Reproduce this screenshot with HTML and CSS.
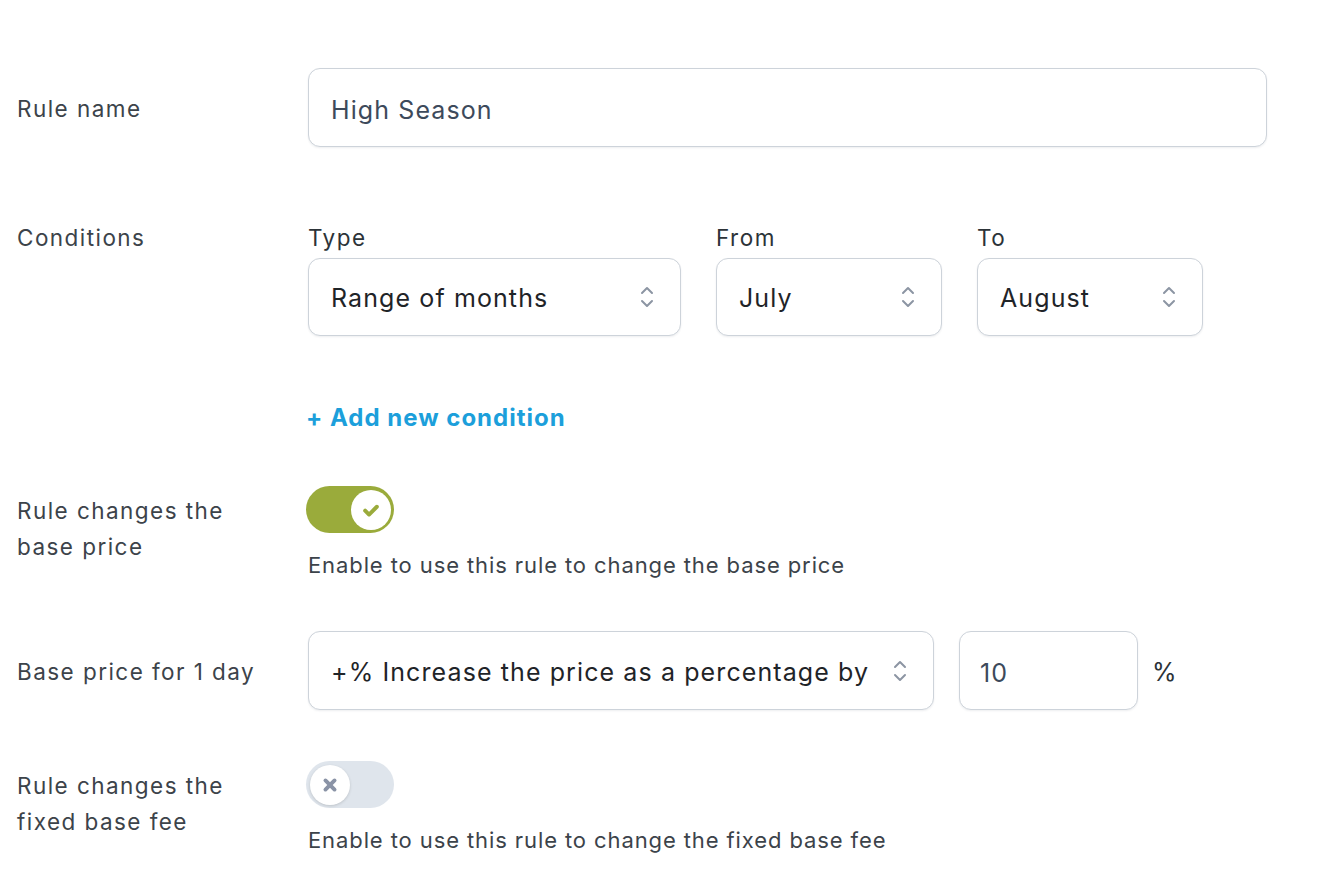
FILE: index.html
```html
<!DOCTYPE html>
<html>
<head>
<meta charset="utf-8">
<link rel="stylesheet" href="styles.css">
</head>
<body>
<div class="form">
  <div class="row row-name">
    <div class="label label-name">Rule name</div>
    <div class="field">
      <div class="input input-wide">High Season</div>
    </div>
  </div>

  <div class="row row-cond">
    <div class="label label-top">Conditions</div>
    <div class="field">
      <div class="cond">
        <div class="cond-col">
          <div class="sublabel">Type</div>
          <div class="select sel-type"><span>Range of months</span><svg class="chev" viewBox="0 0 14 26"><path d="M2 9 L7 4 L12 9 M2 17 L7 22 L12 17" fill="none" stroke="#8c95a3" stroke-width="2" stroke-linecap="round" stroke-linejoin="round"/></svg></div>
        </div>
        <div class="cond-col">
          <div class="sublabel">From</div>
          <div class="select sel-month"><span>July</span><svg class="chev" viewBox="0 0 14 26"><path d="M2 9 L7 4 L12 9 M2 17 L7 22 L12 17" fill="none" stroke="#8c95a3" stroke-width="2" stroke-linecap="round" stroke-linejoin="round"/></svg></div>
        </div>
        <div class="cond-col">
          <div class="sublabel">To</div>
          <div class="select sel-month"><span>August</span><svg class="chev" viewBox="0 0 14 26"><path d="M2 9 L7 4 L12 9 M2 17 L7 22 L12 17" fill="none" stroke="#8c95a3" stroke-width="2" stroke-linecap="round" stroke-linejoin="round"/></svg></div>
        </div>
      </div>
      <a class="add-link">+ Add new condition</a>
    </div>
  </div>

  <div class="row row-toggle1">
    <div class="label label-top label-2l">Rule changes the<br>base price</div>
    <div class="field">
      <div class="toggle on"><span class="knob"><svg viewBox="0 0 20 20"><path d="M5.5 10.5 L8.5 13.5 L14.5 7.5" fill="none" stroke="#9aab3b" stroke-width="3" stroke-linecap="round" stroke-linejoin="round"/></svg></span></div>
      <div class="help">Enable to use this rule to change the base price</div>
    </div>
  </div>

  <div class="row row-base">
    <div class="label label-name">Base price for 1 day</div>
    <div class="field field-inline">
      <div class="select sel-base"><span>+% Increase the price as a percentage by</span><svg class="chev" viewBox="0 0 14 26"><path d="M2 9 L7 4 L12 9 M2 17 L7 22 L12 17" fill="none" stroke="#8c95a3" stroke-width="2" stroke-linecap="round" stroke-linejoin="round"/></svg></div>
      <div class="input input-num">10</div>
      <span class="unit">%</span>
    </div>
  </div>

  <div class="row row-toggle2">
    <div class="label label-top label-2l">Rule changes the<br>fixed base fee</div>
    <div class="field">
      <div class="toggle off"><span class="knob"><svg viewBox="0 0 20 20"><path d="M6.5 6.5 L13.5 13.5 M13.5 6.5 L6.5 13.5" fill="none" stroke="#8a93a6" stroke-width="3" stroke-linecap="round"/></svg></span></div>
      <div class="help">Enable to use this rule to change the fixed base fee</div>
    </div>
  </div>
</div>
</body>
</html>
```

FILE: styles.css
```css
* { box-sizing: border-box; }
html, body {
  margin: 0;
  padding: 0;
  background: #ffffff;
  font-family: Inter, "Noto Sans", "Liberation Sans", sans-serif;
  color: #3c434a;
}
.form {
  padding: 68px 0 0 17px;
  width: 1320px;
}
.row {
  display: flex;
  align-items: center;
}
.label {
  width: 291px;
  flex: none;
  font-size: 22.5px;
  letter-spacing: 1.45px;
  line-height: 36px;
  color: #3c434a;
}
.label-name { padding-top: 3px; }
.label-top { align-self: flex-start; }
.field { flex: none; }
.input {
  border: 1.5px solid #cdd3da;
  border-radius: 12px;
  background: #fff;
  box-shadow: 0 1px 2px rgba(30, 40, 60, 0.08);
  font-size: 25px;
  letter-spacing: 1.1px;
  color: #3d4a5b;
  display: flex;
  align-items: center;
  padding: 4px 0 0 22px;
}
.input-wide { width: 959px; height: 79px; }
.row-cond { margin-top: 76px; }
.row-cond .label-top { margin-top: -3px; }
.cond { display: flex; gap: 35px; }
.sublabel {
  font-size: 22.5px;
  letter-spacing: 1.5px;
  line-height: 28px;
  padding-top: 1px;
  color: #2c3338;
  margin-bottom: 6px;
}
.select {
  border: 1.5px solid #cdd3da;
  border-radius: 12px;
  background: #fff;
  box-shadow: 0 1px 2px rgba(30, 40, 60, 0.08);
  height: 78px;
  display: flex;
  align-items: center;
  justify-content: space-between;
  padding: 2px 26px 0 22px;
  font-size: 25px;
  letter-spacing: 1.1px;
  color: #1f2428;
}
.chev { width: 14px; height: 26px; flex: none; margin-top: -2px; }
.sel-type { width: 373px; }
.sel-month { width: 226px; }
.add-link {
  display: block;
  margin-top: 67px;
  margin-left: -2px;
  font-size: 24px;
  letter-spacing: 1px;
  line-height: 30px;
  font-weight: 700;
  color: #1c9fdb;
}
.row-toggle1 { margin-top: 53px; align-items: flex-start; }
.row-toggle1 .label-top { margin-top: 7px; }
.toggle {
  width: 88px;
  height: 47px;
  border-radius: 24px;
  position: relative;
  margin-left: -2px;
}
.toggle.on { background: #9aab3b; }
.toggle.off { background: #dfe5ec; }
.knob {
  position: absolute;
  top: 3.5px;
  width: 40px;
  height: 40px;
  border-radius: 50%;
  background: #fff;
  display: flex;
  align-items: center;
  justify-content: center;
}
.toggle.on .knob { right: 3.5px; }
.toggle.off .knob { left: 3.5px; box-shadow: 0 1px 3px rgba(0, 0, 0, 0.15); }
.knob svg { width: 26px; height: 26px; }
.help {
  font-size: 22px;
  letter-spacing: 0.9px;
  line-height: 30px;
  margin-top: 17px;
  color: #3c434a;
}
.row-base { margin-top: 51px; }
.field-inline { display: flex; align-items: center; }
.sel-base { width: 626px; height: 79px; }
.input-num { width: 179px; height: 79px; margin-left: 25px; padding-left: 20px; }
.unit { font-size: 25px; color: #2c3338; margin-left: 14px; padding-top: 3px; }
.row-toggle2 { margin-top: 51px; align-items: flex-start; }
.row-toggle2 .label-top { margin-top: 7px; }
```
